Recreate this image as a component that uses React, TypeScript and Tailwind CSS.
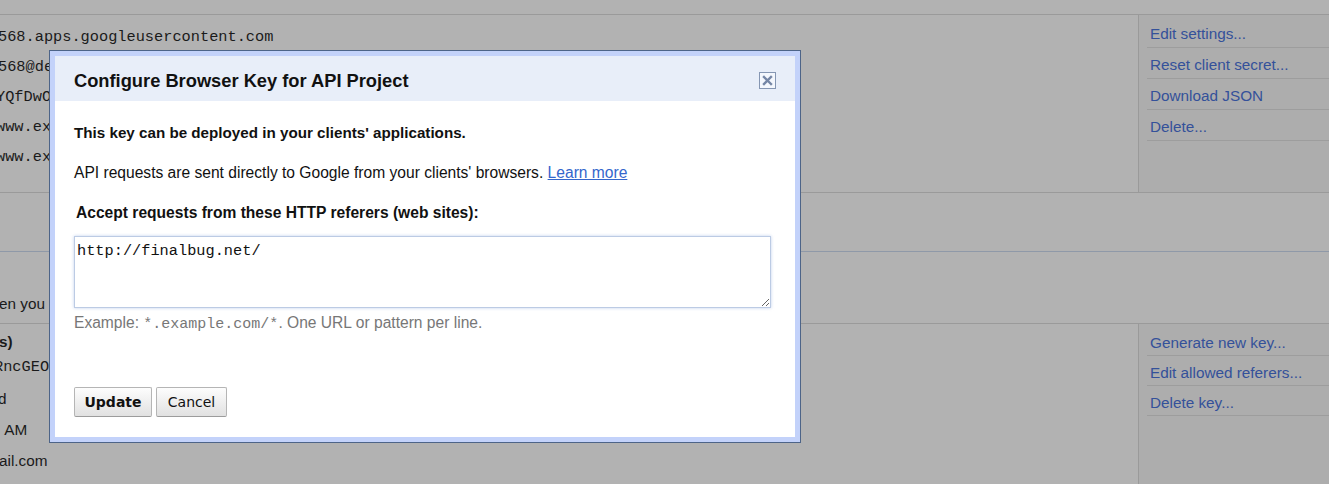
import React from "react"

const sans = { fontFamily: '"Liberation Sans", Arial, sans-serif' }

const clientLinks = ["Edit settings...", "Reset client secret...", "Download JSON", "Delete..."]
const keyLinks = ["Generate new key...", "Edit allowed referers...", "Delete key..."]

const LinkList = ({ items, tall }: { items: string[]; tall?: boolean }) => (
  <div className="w-[191px] shrink-0 border-l border-[#9a9a9a] bg-[#adadad] pl-[8px] pt-[2px]">
    {items.map((item) => (
      <div
        key={item}
        className={`${tall ? "h-[31px]" : "h-[30px]"} border-b border-[#9d9d9d] pl-[3px] pt-[8px] text-[15.3px] leading-[18px] text-[#34519a]`}
      >
        {item}
      </div>
    ))}
  </div>
)

const Dialog = () => (
  <div className="absolute left-[49px] top-[50px] w-[752px] border border-[#4d6488] bg-[#c3d2fa] p-[5px]">
    <div className="bg-white">
      <div className="flex h-[45px] items-center justify-between bg-[#e8eef9] px-[19px] pt-[4px]">
        <h2 className="text-[18.3px] font-bold text-[#111]">Configure Browser Key for API Project</h2>
        <button className="flex h-[17px] w-[17px] items-center justify-center border border-[#8596b3] bg-[#f4f7fd]">
          <svg width="11" height="11" viewBox="0 0 11 11">
            <path d="M2 2 L9 9 M9 2 L2 9" stroke="#7586a6" strokeWidth="2.4" strokeLinecap="square" />
          </svg>
        </button>
      </div>
      <div className="px-[19px] pb-[20px] pt-[22px] text-[15.6px] leading-[20px] text-[#111]">
        <p className="text-[15.2px] font-bold">This key can be deployed in your clients' applications.</p>
        <p className="mt-[20px]">
          API requests are sent directly to Google from your clients' browsers.{" "}
          <a className="text-[#3366cc] underline">Learn more</a>
        </p>
        <p className="mt-[20px] pl-[2px] font-bold">Accept requests from these HTTP referers (web sites):</p>
        <textarea
          defaultValue="http://finalbug.net/"
          className="mt-[13px] block h-[72px] w-[697px] border border-[#bccbe4] px-[2px] py-[5px] text-[15.3px] leading-[18px] text-[#111] shadow-[0_0_3px_rgba(150,175,225,0.6)] outline-none"
          style={{ fontFamily: '"Liberation Mono", "Courier New", monospace' }}
        />
        <p className="mt-[5px] text-[#777]">
          Example: <span className="text-[15px]" style={{ fontFamily: '"Liberation Mono", monospace' }}>*.example.com/*</span>. One URL or pattern per line.
        </p>
        <div className="mt-[52px] flex gap-[4px]">
          <button
            className="h-[30px] w-[78px] rounded-[2px] border border-[#b5b5b5] border-b-[#9c9c9c] bg-gradient-to-b from-[#fdfdfd] to-[#e1e1e1] text-[14px] font-bold text-[#111]"
            style={{ fontFamily: '"DejaVu Sans", sans-serif' }}
          >
            Update
          </button>
          <button
            className="h-[30px] w-[71px] rounded-[2px] border border-[#b5b5b5] border-b-[#9c9c9c] bg-gradient-to-b from-[#fdfdfd] to-[#e1e1e1] text-[14px] text-[#111]"
            style={{ fontFamily: '"DejaVu Sans", sans-serif' }}
          >
            Cancel
          </button>
        </div>
      </div>
    </div>
  </div>
)

export default function App() {
  const mono = "text-[15.3px] whitespace-nowrap"
  const monoFont = { fontFamily: '"Liberation Mono", "Courier New", monospace' }
  return (
    <div className="relative h-[484px] w-full overflow-hidden bg-[#b2b2b2] text-[#1a1a1a]" style={sans}>
      <div className="h-[15px] border-b border-[#9a9a9a]" />

      {/* client id section */}
      <div className="flex h-[178px] border-b border-[#9a9a9a]">
        <div className="flex-1 overflow-hidden pt-[7px] leading-[30px]" style={monoFont}>
          <div className={`${mono} -ml-[2px]`}>568.apps.googleusercontent.com</div>
          <div className={`${mono} -ml-[2px]`}>568@developer.gserviceaccount.com</div>
          <div className={`${mono} -ml-[4px]`}>YQfDwOxK3mTq9</div>
          <div className={`${mono} -ml-[4px]`}>www.example.com</div>
          <div className={`${mono} -ml-[4px]`}>www.example.com/oauth2callback</div>
        </div>
        <LinkList items={clientLinks} tall />
      </div>

      <div className="h-[59px] border-b border-[#8f99a8]" />

      <div className="flex h-[72px] items-end border-b border-[#9a9a9a] pb-[9px]">
        <p className="-ml-[1px] whitespace-nowrap text-[15.3px] leading-[20px]">en you</p>
      </div>

      {/* api key section */}
      <div className="flex h-[160px]">
        <div className="flex-1 overflow-hidden pt-[8px] text-[15.3px]">
          <div className="-ml-[1px] whitespace-nowrap font-bold leading-[20px]">s)</div>
          <div className={`${mono} -ml-[6px] leading-[31px]`} style={monoFont}>RncGEO</div>
          <div className="-ml-[2px] leading-[31px]">d</div>
          <div className="whitespace-nowrap leading-[31px]">&nbsp;AM</div>
          <div className="-ml-[1px] leading-[31px]">ail.com</div>
        </div>
        <LinkList items={keyLinks} />
      </div>

      <Dialog />
    </div>
  )
}
